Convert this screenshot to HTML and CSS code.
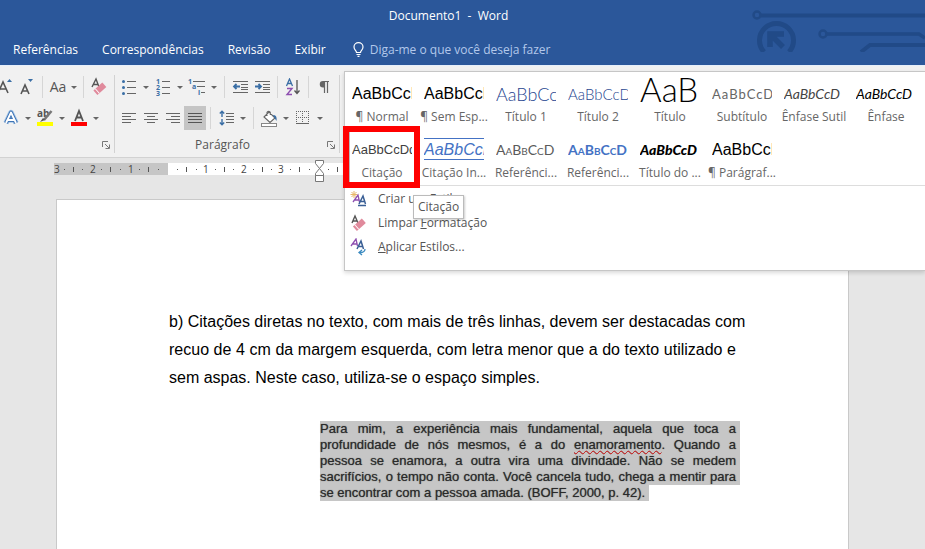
FILE: index.html
```html
<!DOCTYPE html>
<html lang="pt-BR">
<head>
<meta charset="utf-8">
<title>Documento1 - Word</title>
<link rel="stylesheet" href="styles.css">
</head>
<body>
<header class="top">
  <svg class="circuit" width="175" height="52" viewBox="750 0 175 52" fill="none" stroke="#214a87" aria-hidden="true">
    <circle cx="757" cy="15" r="3.5" stroke-width="2.5"/><path d="M761 15.500H925" stroke-width="4"/>
    <path d="M764 52A17 17 0 1 1 789 52" stroke-width="5"/>
    <path d="M770 47V34H784M770 34l13 13" stroke-width="5.500"/>
    <circle cx="823" cy="34" r="3.500" stroke-width="2.500"/><path d="M827 34H919l6 4" stroke-width="3.500"/>
    <path d="M861 52l9-7H925" stroke-width="4"/>
  </svg>
  <div class="title">Documento1&nbsp; -&nbsp; Word</div>
  <nav class="tabs">
    <a href="#">Referências</a><a href="#">Correspondências</a><a href="#">Revisão</a><a href="#">Exibir</a>
    <label class="tell">
      <svg width="11" height="15" viewBox="0 0 11 15" fill="none" stroke="#fff" stroke-width="1.2"><path d="M3.500 10.500C3.500 8.500 1 8 1 5a4.500 4.300 0 0 1 9 0c0 3-2.500 3.500-2.500 5.500zM3.500 12.500h4M4.500 14.300h2"/></svg>
      <input type="text" placeholder="Diga-me o que você deseja fazer" aria-label="Diga-me o que você deseja fazer">
    </label>
  </nav>
</header>

<section class="ribbon">
  <div class="group font">
    <div class="row sizes">
      <button aria-label="Aumentar fonte"><svg width="20" height="20" viewBox="0 0 20 20"><path d="M3 16L8 5l5 11M5 12h6" fill="none" stroke="#555" stroke-width="1.600"/><path d="M12 5l2.500-3L17 5z" fill="#3a6ea5"/></svg></button>
      <button aria-label="Diminuir fonte"><svg width="20" height="20" viewBox="0 0 20 20"><path d="M4 17l4-9 4 9M5.500 14h5" fill="none" stroke="#555" stroke-width="1.600"/><path d="M11 2l2.500 3L16 2z" fill="#3a6ea5"/></svg></button>
      <i class="sep"></i>
      <button class="drop case"><span>Aa</span><b class="caret"></b></button>
      <i class="sep"></i>
      <button aria-label="Limpar formatação"><svg width="18" height="20" viewBox="0 0 18 20"><path d="M2 10l4-8 3 8M3.500 7.500h4" fill="none" stroke="#555" stroke-width="1.400"/><g transform="rotate(-42 9.500 12)"><rect x="4" y="9" width="12" height="6" fill="#e08a9c"/><path d="M6.500 9v6" stroke="#fff"/></g></svg></button>
    </div>
    <div class="row">
      <button class="drop" aria-label="Efeitos de texto"><svg width="20" height="20" viewBox="0 0 20 20" fill="none" stroke-linejoin="round"><path d="M5 15L10 4.500 15 15M7 12h6" stroke="#a9c8e8" stroke-width="5.500"/><path d="M5 15L10 4.500 15 15M7 12h6" stroke="#3f74b5" stroke-width="4"/><path d="M5 15L10 4.500 15 15M7 12h6" stroke="#fff" stroke-width="1.800"/></svg><b class="caret"></b></button>
      <button class="drop" aria-label="Realce"><svg width="18" height="20" viewBox="0 0 18 20"><text x="1" y="9" class="ab">ab</text><path d="M15.500 3L8 12" stroke="#777" stroke-width="2.500"/><path d="M7 10l2 2-5 2z" fill="#555"/><rect x="1" y="14" width="16" height="4" fill="#ff0"/></svg><b class="caret"></b></button>
      <button class="drop" aria-label="Cor da fonte"><svg width="18" height="20" viewBox="0 0 18 20"><path d="M5 13L9 3l4 10M6.500 9.500h5" fill="none" stroke="#555" stroke-width="1.800"/><rect x="1" y="14" width="16" height="4" fill="red"/></svg><b class="caret"></b></button>
    </div>
    <div class="caption"><button class="launch" aria-label="Opções de fonte"><svg width="8" height="8" viewBox="0 0 8 8" fill="none" stroke="#777"><path d="M.5 6V.5H6M3 3l4 4M7.500 3.500v4h-4"/></svg></button></div>
  </div>

  <div class="group para">
    <div class="row">
      <button class="drop" aria-label="Marcadores"><svg width="14" height="16" viewBox="0 0 14 16"><path d="M5 2.500h9M5 8.500h9M5 14.500h9" stroke="#666"/><g fill="#3a6ea5"><circle cx="1.500" cy="2.500" r="1.500"/><circle cx="1.500" cy="8.500" r="1.500"/><circle cx="1.500" cy="14.500" r="1.500"/></g></svg><b class="caret"></b></button>
      <button class="drop" aria-label="Numeração"><svg width="14" height="18" viewBox="0 0 14 18"><path d="M6 3.500h8M6 9.500h8M6 15.500h8" stroke="#666"/><g class="num"><text x="0" y="6">1</text><text x="0" y="12">2</text><text x="0" y="18">3</text></g></svg><b class="caret"></b></button>
      <button class="drop" aria-label="Lista de vários níveis"><svg width="18" height="18" viewBox="0 0 18 18"><path d="M5 3.500h12M9 8.500h8M13 14.500h4" stroke="#666"/><g class="num"><text x="0" y="6">1</text><text x="4" y="11">a</text><text x="10" y="17">i</text></g></svg><b class="caret"></b></button>
      <i class="sep"></i>
      <button aria-label="Diminuir recuo"><svg width="17" height="14" viewBox="0 0 17 14"><path d="M1 1.500h15M9 4.500h7M9 7.500h7M9 9.500h7M1 12.500h15" stroke="#666"/><path d="M8 6.500H2M4.500 4L2 6.500 4.500 9" fill="none" stroke="#3a6ea5" stroke-width="1.800"/></svg></button>
      <button aria-label="Aumentar recuo"><svg width="17" height="14" viewBox="0 0 17 14"><path d="M1 1.500h15M9 4.500h7M9 7.500h7M9 9.500h7M1 12.500h15" stroke="#666"/><path d="M1 6.500h6M4.500 4L7 6.500 4.500 9" fill="none" stroke="#3a6ea5" stroke-width="1.800"/></svg></button>
      <i class="sep"></i>
      <button aria-label="Classificar"><svg width="16" height="18" viewBox="0 0 16 18" fill="none"><path d="M1.500 8L4.500 1l3 7M2.500 5.500h4" stroke="#3a6ea5" stroke-width="1.300"/><path d="M2 10.500h5l-5 6h5" stroke="#8e4fb0" stroke-width="1.400"/><path d="M12 2v13M9.500 12.500L12 15.500l2.500-3" stroke="#555" stroke-width="1.300"/></svg></button>
      <i class="sep"></i>
      <button aria-label="Mostrar tudo"><svg width="12" height="14" viewBox="0 0 12 14"><path d="M5 1.500h6M6.500 1v12M9.500 1v12" stroke="#666" stroke-width="1.200"/><path d="M6 1H5a3.200 3.200 0 0 0 0 6.500h1z" fill="#666"/></svg></button>
    </div>
    <div class="row">
      <button aria-label="Alinhar à esquerda"><svg width="14" height="12" viewBox="0 0 14 12" stroke="#666"><path d="M0 1.500h14M0 4.500h9M0 7.500h14M0 10.500h9"/></svg></button>
      <button aria-label="Centralizar"><svg width="14" height="12" viewBox="0 0 14 12" stroke="#666"><path d="M0 1.500h14M3 4.500h8M0 7.500h14M3 10.500h8"/></svg></button>
      <button aria-label="Alinhar à direita"><svg width="14" height="12" viewBox="0 0 14 12" stroke="#666"><path d="M0 1.500h14M5 4.500h9M0 7.500h14M5 10.500h9"/></svg></button>
      <button class="on" aria-label="Justificar"><svg width="14" height="12" viewBox="0 0 14 12" stroke="#555"><path d="M0 1.500h14M0 4.500h14M0 7.500h14M0 10.500h14"/></svg></button>
      <i class="sep"></i>
      <button class="drop" aria-label="Espaçamento"><svg width="15" height="16" viewBox="0 0 15 16" fill="none"><path d="M7 3.500h8M7 6.500h8M7 9.500h8M7 12.500h8" stroke="#666"/><path d="M3 1v6M3 9v6M.8 3.500L3 1.200l2.200 2.300M.8 12.500L3 14.800l2.200-2.300" stroke="#3a6ea5" stroke-width="1.400"/></svg><b class="caret"></b></button>
      <i class="sep"></i>
      <button class="drop" aria-label="Sombreamento"><svg width="17" height="17" viewBox="0 0 17 17" fill="none"><path d="M3 7l5-5 6 6-5 4.500z M6 6V2.500a1.700 1.700 0 0 1 3.300 0V5" fill="#fff" stroke="#666" stroke-width="1.100"/><path d="M12 5c3 0 4 2 3.500 6l-2-3z" fill="#3a6ea5"/><rect x=".5" y="13.500" width="15" height="3" fill="#fff" stroke="#888"/></svg><b class="caret"></b></button>
      <button class="drop" aria-label="Bordas"><svg width="14" height="14" viewBox="0 0 14 14" stroke="#666"><path d="M.5 0v12M6.500 0v12M12.500 0v12M0 .5h13M0 6.500h13" stroke-dasharray="1 1"/><path d="M0 12.500h13"/></svg><b class="caret"></b></button>
    </div>
    <div class="caption"><span>Parágrafo</span><button class="launch" aria-label="Opções de parágrafo"><svg width="8" height="8" viewBox="0 0 8 8" fill="none" stroke="#777"><path d="M.5 6V.5H6M3 3l4 4M7.500 3.500v4h-4"/></svg></button></div>
  </div>

  <div class="gallery">
    <div class="styles">
      <button class="style"><span class="pv arial">AaBbCcDd</span><span>¶ Normal</span></button>
      <button class="style"><span class="pv arial">AaBbCcDd</span><span>¶ Sem Esp...</span></button>
      <button class="style"><span class="pv h1">AaBbCcD</span><span>Título 1</span></button>
      <button class="style"><span class="pv h2">AaBbCcDd</span><span>Título 2</span></button>
      <button class="style"><span class="pv big">AaB</span><span>Título</span></button>
      <button class="style"><span class="pv sub">AaBbCcDd</span><span>Subtítulo</span></button>
      <button class="style"><span class="pv it soft">AaBbCcD</span><span>Ênfase Sutil</span></button>
      <button class="style"><span class="pv it">AaBbCcD</span><span>Ênfase</span></button>
      <button class="style picked"><span class="pv quote">AaBbCcDd</span><span>Citação</span></button>
      <button class="style"><span class="pv intense">AaBbCcDd</span><span>Citação In...</span></button>
      <button class="style"><span class="pv caps">AaBbCcD</span><span>Referênci...</span></button>
      <button class="style"><span class="pv caps strong">AaBbCcD</span><span>Referênci...</span></button>
      <button class="style"><span class="pv it bold">AaBbCcD</span><span>Título do ...</span></button>
      <button class="style"><span class="pv arial">AaBbCcDd</span><span>¶ Parágraf...</span></button>
    </div>
    <div class="commands">
      <button><svg width="18" height="18" viewBox="0 0 18 18" fill="none"><path d="M4 1v7M.5 4.500h7M1.500 2l5 5M6.500 2l-5 5" stroke="#e8b86a"/><path d="M3 12l5-7 1.500 7M5 10h4" stroke="#8e4fb0" stroke-width="1.300"/><path d="M9 14l4-8 2.500 8M10.500 11.500h4M8 15.500h8" stroke="#3a5f95" stroke-width="1.500"/></svg><span>Criar u<u>m</u> Estilo</span></button>
      <button><svg width="18" height="18" viewBox="0 0 18 18"><path d="M2 9l3-7 3 7M3 7h4" fill="none" stroke="#555" stroke-width="1.400"/><g transform="rotate(-42 9 11)"><rect x="3.500" y="8" width="12" height="6" fill="#e08a9c"/><path d="M6 8v6" stroke="#fff"/></g></svg><span>Limpar <u>F</u>ormatação</span></button>
      <button><svg width="18" height="18" viewBox="0 0 18 18" fill="none"><path d="M1 8l5-7 1.500 7M3 6h4" stroke="#8e4fb0" stroke-width="1.300"/><path d="M7 11l4-8 2.500 8M8.500 8.500h4" stroke="#3a5f95" stroke-width="1.500"/><path d="M15 11c0 3-2 3.500-5 3.500M12 12l-3 2.500 3 2.500" stroke="#3a8ac0" stroke-width="1.300"/></svg><span><u>A</u>plicar Estilos...</span></button>
    </div>
    <div class="tip" role="tooltip">Citação</div>
  </div>
</section>

<main class="desk">
  <div class="ruler">
    <svg width="114" height="12" viewBox="0 0 114 12"><text x="0" y="10">3</text><text x="36" y="10">2</text><text x="74" y="10">1</text><path d="M19.500 4v5M56.500 4v5M94.500 4v5M10 6.500h1M28 6.500h1M47 6.500h1M66 6.500h1M85 6.500h1M104 6.500h1" stroke="#555"/></svg>
    <div class="scale"><svg width="190" height="12" viewBox="0 0 190 12"><text x="35" y="10">1</text><text x="73" y="10">2</text><text x="110" y="10">3</text><path d="M18.500 4v5M56.500 4v5M94.500 4v5M131.500 4v5M169.500 4v5M9 6.500h1M28 6.500h1M47 6.500h1M65 6.500h1M85 6.500h1M103 6.500h1M122 6.500h1M141 6.500h1M160 6.500h1" stroke="#555"/></svg></div>
    <svg class="indent" width="10" height="23" viewBox="0 0 10 23" fill="#fff" stroke="#777"><path d="M.5.5h8v3l-4 5-4-5zM.5 15.500v-2l4-5 4 5v2zM.5 15.500h8v6h-8z"/></svg>
  </div>
  <article class="page">
    <p class="body"><span>b) Citações diretas no texto, com mais de três linhas, devem ser destacadas com</span> <span>recuo de 4 cm da margem esquerda, com letra menor que a do texto utilizado e</span> <span class="last">sem aspas. Neste caso, utiliza-se o espaço simples.</span></p>
    <blockquote><span>Para mim, a experiência mais fundamental, aquela que toca a</span> <span>profundidade de nós mesmos, é a do <em>enamoramento</em>. Quando a</span> <span>pessoa se enamora, a outra vira uma divindade. Não se medem</span> <span>sacrifícios, o tempo não conta. Você cancela tudo, chega a mentir para</span> <span class="last">se encontrar com a pessoa amada. (BOFF, 2000, p. 42).</span></blockquote>
  </article>
</main>
</body>
</html>
```
FILE: styles.css
```css
* { box-sizing: border-box; }
html, body { height: 100%; }
body {
  margin: 0;
  display: flex;
  flex-direction: column;
  background: #e6e6e6;
  color: #555;
  font: 12px/16px "Open Sans", "Noto Sans", sans-serif;
}
button {
  border: 0;
  padding: 0;
  background: none;
  color: inherit;
  font: inherit;
}
svg { flex: none; display: block; }

/* Title bar and tabs */
.top { position: relative; height: 65px; flex: none; background: #2b579a; color: #fff; }
.circuit { position: absolute; top: 0; right: 0; }
.title { height: 32px; line-height: 32px; padding-right: 28px; text-align: center; }
.tabs { display: flex; align-items: center; gap: 24px; height: 33px; padding: 2px 0 0 13px; }
.tabs a { color: #fff; text-decoration: none; }
.tell { display: flex; align-items: center; gap: 6px; flex: 1; padding-left: 3px; }
.tell input {
  flex: 1;
  padding: 0;
  border: 0;
  outline: 0;
  background: none;
  color: #fff;
  font: inherit;
}
.tell input::placeholder { color: #b3c8ea; opacity: 1; }

/* Ribbon */
.ribbon {
  position: relative;
  display: flex;
  flex: none;
  height: 93px;
  padding: 9px 0 4px;
  background: #f1f1f1;
  border-top: 1px solid #e6effb;
  border-bottom: 1px solid #d2d2d2;
}
.group { display: flex; flex-direction: column; gap: 7px; border-right: 1px solid #d2d2d2; }
.font { width: 115px; }
.para { width: 225px; padding-left: 3px; }
.row { display: flex; align-items: center; height: 24px; }
.sizes { margin-left: -6px; }
.row button { display: flex; align-items: center; justify-content: center; width: 22px; height: 24px; flex: none; }
.row .drop { width: 34px; display: grid; grid-template-columns: 22px 12px; justify-items: center; }
.row .case { width: 32px; grid-template-columns: 22px 10px; font-size: 14px; }
.row .on { background: #c5c5c5; }
.caret { border: 3px solid transparent; border-top-color: #666; border-bottom: 0; }
.sep { width: 1px; height: 22px; margin: 0 4px; flex: none; background: #d6d6d6; }
.ab { font: bold 10px "Open Sans", sans-serif; fill: #555; }
.num { font: bold 7px "Open Sans", sans-serif; fill: #3a6ea5; }
.caption { display: flex; align-items: center; height: 16px; padding-right: 4px; }
.caption span { flex: 1; text-align: center; }
.launch { margin-left: auto; }

/* Style gallery */
.gallery {
  position: absolute;
  z-index: 2;
  left: 344px;
  right: 0;
  top: 5px;
  background: #fff;
  border: 1px solid #c6c6c6;
  border-right: 0;
  box-shadow: 0 2px 4px rgba(0, 0, 0, .15);
}
.styles {
  display: grid;
  grid-template-columns: repeat(auto-fill, 72px);
  grid-auto-rows: 56px;
  padding: 1px 0 0 1px;
  border-bottom: 1px solid #ddd;
}
.style { position: relative; display: flex; flex-direction: column; align-items: center; white-space: nowrap; color: #666; }
.pv {
  width: 60px;
  height: 36px;
  overflow: hidden;
  text-align: left;
  color: #000;
  font: 14px/42px Lato, sans-serif;
}
.arial { font: 16px/42px "Liberation Sans", sans-serif; }
.h1 { font-size: 18px; font-weight: 300; color: #1f4690; }
.h2 { font-size: 15px; font-weight: 300; color: #1f4690; }
.big { font-size: 33px; font-weight: 300; line-height: 32px; }
.sub { color: #666; letter-spacing: 1px; font-size: 13px; }
.it { font-style: italic; }
.soft { color: #444; }
.bold { font-weight: 900; }
.quote { font: 13px/42px "Liberation Sans", sans-serif; color: #404040; }
.intense {
  height: 22px;
  margin: 9px 0 5px;
  border: solid #4472c4;
  border-width: 1px 0;
  font: italic 16px/22px "Liberation Sans", sans-serif;
  color: #4472c4;
}
.caps { font-variant: small-caps; color: #5a5a5a; }
.strong { font-weight: 700; color: #4472c4; }
.picked::before { content: ""; position: absolute; inset: 2px 3px 1px; border: 1px solid #bbb; }
.picked::after { content: ""; position: absolute; inset: -3px -2px -3px -3px; border: 6px solid red; z-index: 1; }
.commands { display: flex; flex-direction: column; padding: 1px 0 11px 5px; }
.commands button { display: flex; align-items: center; gap: 10px; height: 24px; }
.tip {
  position: absolute;
  z-index: 3;
  left: 68px;
  top: 123px;
  padding: 3px 4px;
  border: 1px solid #bbb;
  background: #fff;
  box-shadow: 1px 1px 2px rgba(0, 0, 0, .2);
}

/* Document area */
.desk { flex: 1; display: flex; flex-direction: column; }
.ruler { position: relative; display: flex; flex: none; height: 41px; padding: 5px 0 0 54px; }
.ruler > svg:first-child { background: #c6c6c6; }
.ruler text { font: 10px "Open Sans", sans-serif; fill: #444; }
.scale { height: 12px; flex: 1; margin-right: 77px; background: #fff; }
.ruler .indent { position: absolute; left: 315px; top: 2px; }
.page {
  flex: 1;
  margin: 0 76px 0 56px;
  padding: 108px 112px 0;
  background: #fff;
  border: 1px solid #c9c9c9;
  border-bottom: 0;
  color: #000;
  white-space: nowrap;
}
.page span { display: block; text-align: justify; text-align-last: justify; }
.page .last { width: fit-content; text-align-last: left; }
.body { margin: 0; font: 16px/28px "Liberation Sans", sans-serif; }
blockquote {
  margin: 29px -4px 0 151px;
  color: #2a2a2a;
  font: 13px/16px "Liberation Sans", sans-serif;
  text-shadow: 0 0 1px #555;
}
blockquote span { padding-right: 4px; background: #c6c6c6; }
em { font-style: normal; text-decoration: underline wavy #d22 1px; text-underline-offset: 1px; }
```
